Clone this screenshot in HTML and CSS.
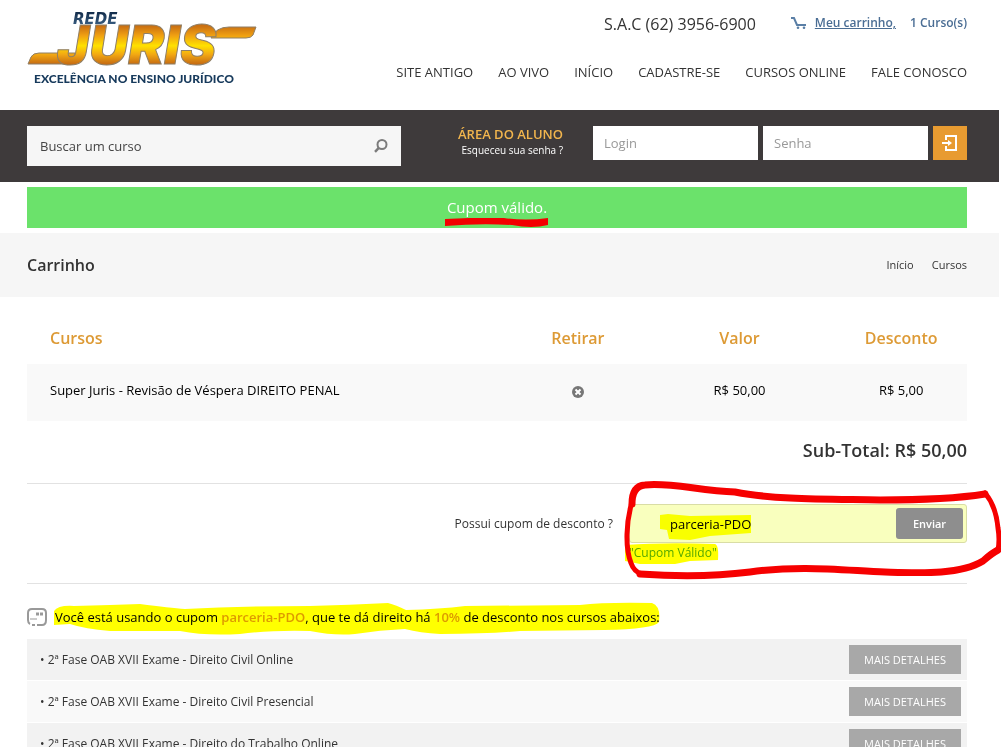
FILE: index.html
```html
<!DOCTYPE html>
<html lang="pt-BR">
<head>
<meta charset="utf-8">
<title>Rede Juris - Carrinho</title>
<link rel="stylesheet" href="styles.css">
</head>
<body>
<div class="page">
  <header class="header wrap">
    <a class="logo" href="#" aria-label="Rede Juris">
      <svg width="232" height="76" viewBox="0 0 232 76">
        <defs>
          <linearGradient id="gold" gradientUnits="userSpaceOnUse" x1="0" y1="16" x2="0" y2="54">
            <stop offset="0" stop-color="#c96f12"/>
            <stop offset="0.25" stop-color="#f0a012"/>
            <stop offset="0.52" stop-color="#ffe100"/>
            <stop offset="0.75" stop-color="#f2a813"/>
            <stop offset="1" stop-color="#c66c12"/>
          </linearGradient>
          <linearGradient id="navy" x1="0" y1="0" x2="0" y2="1">
            <stop offset="0" stop-color="#0c2340"/>
            <stop offset="1" stop-color="#41698f"/>
          </linearGradient>
        </defs>
        <text class="logo-top" x="46" y="14">REDE</text>
        <g class="logo-gold">
          <path d="M1 54 L4 47 Q6 43 12 43 H48 L46 54 Z"/>
          <path d="M184 28 Q189 17 202 17 H229 L226 25 Q224 28 219 28 Z"/>
          <text class="logo-main" x="30" y="54">JURIS</text>
        </g>
        <text class="logo-sub" x="7" y="73">EXCELÊNCIA NO ENSINO JURÍDICO</text>
      </svg>
    </a>
    <div class="header-side">
      <div class="contact">
        <span class="phone">S.A.C (62) 3956-6900</span>
        <div class="cart">
          <svg width="16" height="12" viewBox="0 0 16 12">
            <path d="M0 1 H3 L6 8 H15" fill="none" stroke="#5a7fa6" stroke-width="2"/>
            <circle cx="7" cy="10.700" r="1.300" fill="#5a7fa6"/>
            <circle cx="13" cy="10.700" r="1.300" fill="#5a7fa6"/>
          </svg>
          <a class="cart-link" href="#">Meu carrinho,</a>
          <span class="cart-count">1 Curso(s)</span>
        </div>
      </div>
      <nav class="nav">
        <a href="#">SITE ANTIGO</a>
        <a href="#">AO VIVO</a>
        <a href="#">INÍCIO</a>
        <a href="#">CADASTRE-SE</a>
        <a href="#">CURSOS ONLINE</a>
        <a href="#">FALE CONOSCO</a>
      </nav>
    </div>
  </header>

  <div class="toolbar wrap">
    <form class="search">
      <input type="text" aria-label="Buscar um curso" placeholder="Buscar um curso">
      <button type="button" aria-label="Buscar">
        <svg width="14" height="14" viewBox="0 0 14 14" fill="none" stroke="#7c7c7c">
          <circle cx="8" cy="5.500" r="4.500" stroke-width="2"/>
          <path d="M4.800 8.800 L1 12.800" stroke-width="2.500"/>
        </svg>
      </button>
    </form>
    <div class="student">
      <strong>ÁREA DO ALUNO</strong>
      <a href="#">Esqueceu sua senha ?</a>
    </div>
    <form class="login">
      <input type="text" aria-label="Login" placeholder="Login">
      <input type="password" aria-label="Senha" placeholder="Senha">
      <button type="button" aria-label="Entrar">
        <svg width="16" height="16" viewBox="0 0 16 16" fill="none" stroke="#fff" stroke-width="2">
          <path d="M4 5 V1 H14 V15 H4 V11"/>
          <path d="M0 8 H8"/>
          <path d="M6 5 L10 8 L6 11 Z" fill="#fff" stroke="none"/>
        </svg>
      </button>
    </form>
  </div>

  <div class="notice">
    <span class="notice-text">Cupom válido.
      <svg class="underline" width="106" height="12" viewBox="0 0 106 12">
        <path d="M1 2 L25 1 L60 1 Q82 4 104 1 V8 Q88 12 68 8 Q36 6 1 9 Z" fill="#f30000"/>
      </svg>
    </span>
  </div>

  <div class="title-bar wrap">
    <h1>Carrinho</h1>
    <nav class="crumbs"><a href="#">Início</a><a href="#">Cursos</a></nav>
  </div>

  <main class="content">
    <table class="items">
      <thead>
        <tr><th class="col-course">Cursos</th><th class="col-remove">Retirar</th><th class="col-value">Valor</th><th class="col-discount">Desconto</th></tr>
      </thead>
      <tbody>
        <tr>
          <td class="col-course">Super Juris - Revisão de Véspera DIREITO PENAL</td>
          <td>
            <button class="remove" type="button" aria-label="Retirar">
              <svg width="12" height="12" viewBox="0 0 12 12">
                <circle cx="6" cy="6" r="6" fill="#777"/>
                <path d="M3.500 3.500 L8.500 8.500 M8.500 3.500 L3.500 8.500" stroke="#fff" stroke-width="2"/>
              </svg>
            </button>
          </td>
          <td>R$ 50,00</td>
          <td>R$ 5,00</td>
        </tr>
      </tbody>
    </table>
    <p class="subtotal">Sub-Total: R$ 50,00</p>

    <section class="coupon">
      <label for="coupon-code">Possui cupom de desconto ?</label>
      <div class="coupon-side">
        <div class="coupon-field">
          <input id="coupon-code" type="text" value="parceria-PDO">
          <button type="button">Enviar</button>
        </div>
        <p class="coupon-status">"Cupom Válido"</p>
      </div>
      <svg class="marker coupon-marker" width="381" height="100" viewBox="620 480 381 100">
        <path d="M660 515 L668 514 L690 516 L751 515 V533 L710 536 L690 540 L669 539 L667 530 L660 529 Z"/>
        <path d="M625 545 Q665 542 715 544 Q719 545 718 560 L690 561 L675 564 L640 564 L625 561 Z"/>
      </svg>
      <svg class="pen" width="381" height="100" viewBox="620 480 381 100">
        <path d="M632 504 Q632 486 645 485 C670 482 700 491 735 492 C775 500 830 499 880 500 C920 500 960 498 985 494" stroke-width="7"/>
        <path d="M985 493 Q996 506 998 528 Q1000 540 998 550" stroke-width="5"/>
        <path d="M998 550 Q992 553 983 561 C960 575 920 573 885 572 C840 570 800 565 750 572 C710 577 670 576 640 574" stroke-width="7"/>
        <path d="M632 502 C626 522 625 548 631 563 Q634 572 642 574" stroke-width="5"/>
      </svg>
    </section>

    <div class="using">
      <svg width="20" height="18" viewBox="0 0 20 18" fill="none" stroke="#999" stroke-width="2">
        <path d="M3 16 Q1 15 1 12 V5 Q1 1 5 1 H15 Q19 1 19 5 V12 Q19 17 15 17 H10 M5 17 H8"/>
        <path d="M9 6 H12 M13 6 H16" stroke-width="3"/>
        <path d="M3 11 H10" stroke-width="1"/>
      </svg>
      <p>Você está usando o cupom <strong>parceria-PDO</strong>, que te dá direito há <strong>10%</strong> de desconto nos cursos abaixos:</p>
      <svg class="marker using-marker" width="612" height="34" viewBox="52 602 612 34">
        <path d="M54 611 Q58 605 74 606 L110 605 L140 604 Q170 608 185 609 Q240 606 310 606 Q350 605 388 603 Q396 605 406 610 Q440 609 465 606 L580 605 Q605 602 652 603 Q661 606 659 622 Q654 629 604 630 L520 631 Q490 634 440 634 Q420 633 405 629 Q380 630 355 634 Q335 636 310 631 Q270 630 240 634 Q205 636 180 631 Q140 631 110 631 Q85 629 70 624 L54 625 Z"/>
      </svg>
    </div>

    <ul class="courses">
      <li><span>• 2ª Fase OAB XVII Exame - Direito Civil Online</span><button type="button">MAIS DETALHES</button></li>
      <li><span>• 2ª Fase OAB XVII Exame - Direito Civil Presencial</span><button type="button">MAIS DETALHES</button></li>
      <li><span>• 2ª Fase OAB XVII Exame - Direito do Trabalho Online</span><button type="button">MAIS DETALHES</button></li>
    </ul>
  </main>
</div>
</body>
</html>
```
FILE: styles.css
```css
* {
  box-sizing: border-box;
}

body,
h1,
p,
ul {
  margin: 0;
  padding: 0;
}

body {
  font-family: "Open Sans", "Noto Sans", sans-serif;
  font-size: 13px;
  line-height: 20px;
  color: #333;
  background: #fff;
}

a {
  color: inherit;
  text-decoration: none;
}

input,
button {
  font: inherit;
  border: 0;
  border-radius: 0;
  padding: 0;
  margin: 0;
}

button {
  cursor: pointer;
}

svg {
  display: block;
}

.page {
  height: 100vh;
  overflow: hidden;
  padding-right: 2px;
}

.wrap {
  display: flex;
  justify-content: space-between;
  padding-left: 27px;
  padding-right: 32px;
}

.header {
  height: 110px;
  padding-top: 10px;
}

.logo-top {
  font: italic 700 15px "DejaVu Sans", sans-serif;
  fill: url(#navy);
}

.logo-gold {
  fill: url(#gold);
  stroke: #8f7f66;
  stroke-width: 1px;
}

.logo-main {
  font: italic 900 54px Inter, sans-serif;
}

.logo-sub {
  font: 900 12px Lato, sans-serif;
  fill: #173a5c;
}

.header-side {
  display: flex;
  flex-direction: column;
  align-items: flex-end;
  gap: 28px;
  padding-top: 4px;
}

.contact {
  display: flex;
  gap: 35px;
}

.phone {
  font-size: 16px;
}

.cart {
  display: flex;
  align-items: center;
  gap: 8px;
  height: 18px;
  font-size: 12px;
  font-weight: 600;
  color: #4a6d94;
}

.cart-link {
  text-decoration: underline;
}

.cart-count {
  margin-left: 6px;
}

.nav {
  display: flex;
  gap: 25px;
}

.toolbar {
  height: 72px;
  padding-top: 16px;
  background: #3e3a3b;
}

.search {
  display: flex;
  flex: 0 1 374px;
  height: 40px;
  padding: 0 13px;
  background: #f6f6f6;
}

.search input {
  flex: 1;
  min-width: 0;
  background: none;
}

.search input::placeholder {
  color: #444;
}

.search button {
  background: none;
}

.student {
  flex: 1;
  display: flex;
  flex-direction: column;
  padding-right: 30px;
  text-align: right;
}

.student strong {
  font-weight: 600;
  line-height: 16px;
  color: #f2b54d;
}

.student a {
  font-size: 10px;
  line-height: 16px;
  color: #fff;
}

.login {
  display: flex;
  flex: 0 1 374px;
  min-width: 0;
  height: 34px;
  gap: 5px;
}

.login input {
  flex: 1;
  min-width: 0;
  padding: 0 11px;
  background: #fff;
}

.login input::placeholder {
  color: #999;
}

.login button {
  display: grid;
  place-items: center;
  width: 34px;
  background: #e89b31;
}

.notice {
  margin: 5px 32px 5px 27px;
  height: 41px;
  background: #6be26b;
  color: #fff;
  font-size: 15px;
  line-height: 41px;
  text-align: center;
}

.notice-text {
  position: relative;
}

.underline {
  position: absolute;
  left: -3px;
  top: 20px;
}

.title-bar {
  align-items: center;
  height: 64px;
  background: #f6f6f6;
}

.title-bar h1 {
  font-size: 16px;
  font-weight: 600;
}

.crumbs {
  display: flex;
  gap: 18px;
  font-size: 11px;
}

.content {
  padding: 15px 32px 0 27px;
}

.items {
  width: 100%;
  border-collapse: collapse;
  table-layout: fixed;
}

.items th {
  height: 52px;
  padding: 0;
  font-size: 16px;
  font-weight: 600;
  color: #dd9a35;
}

.items td {
  height: 57px;
  padding: 0 0 5px;
  color: #000;
  text-align: center;
  background: #f9f9f9;
}

.items .col-course {
  padding-left: 23px;
  text-align: left;
}

.items .col-remove,
.items .col-discount {
  width: 14%;
}

.items .col-value {
  width: 20.4%;
}

.remove {
  background: none;
  vertical-align: middle;
}

.subtotal {
  padding: 19px 0 23px;
  font-size: 18px;
  font-weight: 600;
  text-align: right;
}

.coupon {
  position: relative;
  display: flex;
  justify-content: flex-end;
  gap: 16px;
  height: 101px;
  padding-top: 20px;
  border-top: 1px solid #e2e2e2;
  border-bottom: 1px solid #e2e2e2;
}

.coupon label {
  font-size: 12px;
  line-height: 40px;
}

.coupon-side {
  flex: 0 1 338px;
}

.coupon-field {
  display: flex;
  height: 39px;
  padding: 3px;
  border: 1px solid #d9dda5;
  border-radius: 3px;
  background: #f9ffbe;
}

.coupon-field input {
  flex: 1;
  min-width: 0;
  padding-left: 37px;
  background: none;
  color: #000;
}

.coupon-field button {
  width: 67px;
  border-radius: 3px;
  background: #8e8e8e;
  color: #fff;
  font-size: 11px;
  font-weight: 600;
}

.coupon-status {
  font-size: 12px;
  color: #54a80c;
}

.marker {
  position: absolute;
  fill: #ff0;
  mix-blend-mode: multiply;
  pointer-events: none;
}

.coupon-marker,
.pen {
  top: -4px;
  right: -34px;
}

.pen {
  position: absolute;
  fill: none;
  stroke: #f60000;
  stroke-linecap: round;
  stroke-linejoin: round;
  pointer-events: none;
}

.using {
  position: relative;
  display: flex;
  align-items: center;
  gap: 8px;
  height: 55px;
  padding-top: 10px;
  color: #000;
}

.using strong {
  font-weight: 600;
  color: #dd9a35;
}

.using-marker {
  left: 25px;
  top: 18px;
}

.courses {
  display: flex;
  flex-direction: column;
  gap: 1px;
  list-style: none;
}

.courses li {
  display: flex;
  justify-content: space-between;
  align-items: center;
  height: 41px;
  padding: 0 6px 0 13px;
  background: #f9f9f9;
  font-size: 12px;
}

.courses li:nth-child(odd) {
  background: #f2f2f2;
}

.courses button {
  width: 112px;
  height: 29px;
  background: #a8a8a8;
  color: #fff;
  font-size: 11px;
}
```
